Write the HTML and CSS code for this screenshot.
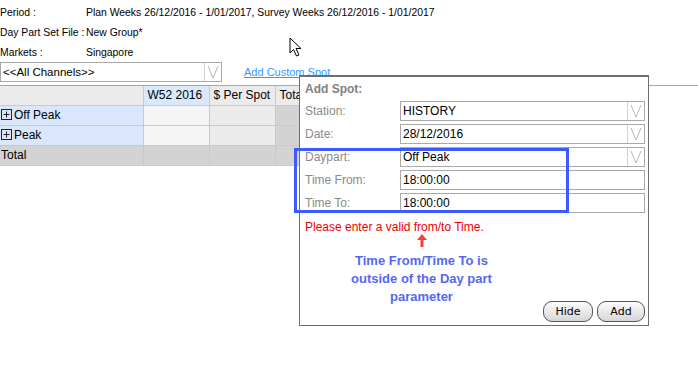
FILE: index.html
```html
<!DOCTYPE html>
<html lang="en">
<head>
  <meta charset="UTF-8">
  <title>Add Spot</title>
  <link rel="stylesheet" href="styles.css">
</head>
<body>

  <div class="info">
    <div class="info-row"><span class="info-label">Period :</span><span>Plan Weeks 26/12/2016 - 1/01/2017, Survey Weeks 26/12/2016 - 1/01/2017</span></div>
    <div class="info-row"><span class="info-label">Day Part Set File :</span><span>New Group*</span></div>
    <div class="info-row"><span class="info-label">Markets :</span><span>Singapore</span></div>
  </div>

  <div class="filter-row">
    <div class="select channel-select">
      <span class="select-text">&lt;&lt;All Channels&gt;&gt;</span>
      <span class="select-arrow"><svg width="12" height="14" viewBox="0 0 12 14"><polyline points="1,1 6,13 11,1" fill="none" stroke="#b8b8b8" stroke-width="1"/></svg></span>
    </div>
    <a class="add-link" href="#">Add Custom Spot</a>
  </div>

  <div class="grid-wrap">
    <table class="grid">
      <tr class="head">
        <td class="c-name"></td>
        <td class="c-week">W52 2016</td>
        <td class="c-spot">$ Per Spot</td>
        <td class="c-total">Total</td>
      </tr>
      <tr>
        <td class="c-name"><svg class="plus" width="11" height="11" viewBox="0 0 11 11"><rect x="0.5" y="0.5" width="10" height="10" fill="none" stroke="#222"/><path d="M2.5 5.5h6M5.5 2.5v6" stroke="#222"/></svg>Off Peak</td>
        <td class="c-week"></td>
        <td class="c-spot"></td>
        <td class="c-total"></td>
      </tr>
      <tr>
        <td class="c-name"><svg class="plus" width="11" height="11" viewBox="0 0 11 11"><rect x="0.5" y="0.5" width="10" height="10" fill="none" stroke="#222"/><path d="M2.5 5.5h6M5.5 2.5v6" stroke="#222"/></svg>Peak</td>
        <td class="c-week"></td>
        <td class="c-spot"></td>
        <td class="c-total"></td>
      </tr>
      <tr class="total-row">
        <td class="c-name">Total</td>
        <td></td>
        <td></td>
        <td></td>
      </tr>
    </table>
  </div>

  <div class="popup">
    <div class="popup-title">Add Spot:</div>
    <div class="form">
      <label>Station:</label>
      <div class="select field"><span class="select-text">HISTORY</span><span class="select-arrow"><svg width="12" height="14" viewBox="0 0 12 14"><polyline points="1,1 6,13 11,1" fill="none" stroke="#b8b8b8" stroke-width="1"/></svg></span></div>
      <label>Date:</label>
      <div class="select field"><span class="select-text">28/12/2016</span><span class="select-arrow"><svg width="12" height="14" viewBox="0 0 12 14"><polyline points="1,1 6,13 11,1" fill="none" stroke="#b8b8b8" stroke-width="1"/></svg></span></div>
      <label>Daypart:</label>
      <div class="select field"><span class="select-text">Off Peak</span><span class="select-arrow"><svg width="12" height="14" viewBox="0 0 12 14"><polyline points="1,1 6,13 11,1" fill="none" stroke="#b8b8b8" stroke-width="1"/></svg></span></div>
      <label>Time From:</label>
      <div class="field"><span class="select-text">18:00:00</span></div>
      <label>Time To:</label>
      <div class="field"><span class="select-text">18:00:00</span></div>
    </div>
    <div class="error">Please enter a valid from/to Time.</div>
    <div class="footer">
      <div class="note">
        <svg class="note-arrow" width="10" height="13" viewBox="0 0 10 13"><polygon points="5,0 10,6 6.5,6 6.5,13 3.5,13 3.5,6 0,6" fill="#ff3b3b"/></svg>
        <p>Time From/Time To is<br>outside of the Day part<br>parameter</p>
      </div>
      <div class="buttons">
        <button class="btn">Hide</button>
        <button class="btn btn-add">Add</button>
      </div>
    </div>
  </div>

  <div class="highlight"></div>

  <svg class="cursor" width="14" height="20" viewBox="0 0 14 20">
    <polygon points="1,1 1,16 4.5,12.5 7.5,19 10,18 7,11.5 12,11.5" fill="#fff" stroke="#000" stroke-width="1" stroke-linejoin="miter"/>
  </svg>

</body>
</html>
```

FILE: styles.css
```css
body {
  font-family: 'Liberation Sans', Arial, sans-serif;
  font-size: 11px;
  color: #000;
  background: #fff;
  margin: 0;
  position: relative;
  height: 368px;
  overflow: hidden;
}

.info {
  padding-top: 2px;
  font-size: 10.4px;
}

.info-row {
  display: flex;
  height: 20px;
  align-items: center;
  white-space: nowrap;
}

.info-label {
  width: 86px;
  flex-shrink: 0;
}

.filter-row {
  display: flex;
  align-items: center;
  height: 20px;
}

.select {
  display: flex;
  align-items: stretch;
  border: 1px solid #a9a9a9;
  background: #fff;
  box-sizing: border-box;
}

.select-text {
  flex: 1;
  display: flex;
  align-items: center;
  padding-left: 2px;
  font-size: 11.5px;
  white-space: nowrap;
}

.select-arrow {
  width: 16px;
  border-left: 1px solid #cfcfcf;
  display: flex;
  align-items: center;
  justify-content: center;
}

.channel-select {
  width: 222px;
  height: 20px;
}

.add-link {
  margin-left: 22px;
  color: #3399ff;
  font-size: 11px;
  text-decoration: underline;
}

.grid-wrap {
  margin-top: 3px;
  border-top: 1px solid #a8a8a8;
}

.grid {
  border-collapse: collapse;
  font-size: 12px;
}

.grid td {
  height: 20px;
  padding: 0 0 0 4px;
  border: 1px solid #c9c9c9;
  border-top: none;
  background: #d3d3d3;
  white-space: nowrap;
  box-sizing: border-box;
  line-height: 14px;
}

.grid tr.head td {
  height: 19px;
}

.grid td.c-name {
  width: 143px;
  padding-left: 1px;
  border-left: none;
  background: #d9e6fb;
}

.grid td.c-week {
  width: 66px;
  background: #f5f5f5;
}

.grid td.c-spot {
  width: 66px;
  background: #ebebeb;
}

.grid td.c-total {
  width: 66px;
  background: #d3d3d3;
}

.grid .head td.c-name {
  background: #ebebeb;
}

.grid .head td.c-week {
  background: #dae8fc;
}

.grid .head td.c-spot,
.grid .head td.c-total {
  background: #ebebeb;
}

.grid .total-row td,
.grid .total-row td.c-name {
  background: #d3d3d3;
}

.plus {
  margin-right: 2px;
  vertical-align: -1px;
}

.popup {
  position: absolute;
  left: 299px;
  top: 75px;
  width: 350px;
  height: 251px;
  box-sizing: border-box;
  border: 1px solid #6e6e6e;
  border-top-width: 2px;
  background: #fff;
  padding: 0 3px 3px 5px;
  display: flex;
  flex-direction: column;
}

.popup-title {
  color: #808080;
  font-weight: bold;
  font-size: 12px;
  height: 25px;
  line-height: 24px;
}

.form {
  display: grid;
  grid-template-columns: 95px 245px;
  grid-auto-rows: 20px;
  row-gap: 3px;
  align-items: center;
}

.form label {
  color: #8a8a8a;
  font-size: 12px;
}

.field {
  display: flex;
  height: 20px;
  border: 1px solid #a9a9a9;
  box-sizing: border-box;
  background: #fff;
}

.field .select-text {
  font-size: 12px;
}

.error {
  color: #ee0000;
  font-size: 12px;
  line-height: 14px;
  margin-top: 7px;
}

.footer {
  margin-top: auto;
  display: flex;
  justify-content: space-between;
  align-items: flex-end;
}

.note {
  display: flex;
  flex-direction: column;
  align-items: center;
  width: 233px;
  padding-bottom: 16px;
}

.note p {
  margin: 5px 0 0;
  color: #5468f2;
  font-weight: bold;
  font-size: 13px;
  line-height: 18px;
  text-align: center;
}

.buttons {
  display: flex;
  gap: 4px;
}

.btn {
  height: 21px;
  width: 50px;
  border: 1px solid #555;
  border-radius: 9px;
  background: linear-gradient(#fdfdfd, #d6d6d6);
  font-family: 'DejaVu Sans', sans-serif;
  font-size: 11px;
  padding: 0;
  color: #000;
}

.btn-add {
  width: 48px;
}

.highlight {
  position: absolute;
  left: 294px;
  top: 148px;
  width: 275px;
  height: 65px;
  box-sizing: border-box;
  border: 3px solid #3d5afe;
}

.cursor {
  position: absolute;
  left: 289px;
  top: 37px;
}
```
